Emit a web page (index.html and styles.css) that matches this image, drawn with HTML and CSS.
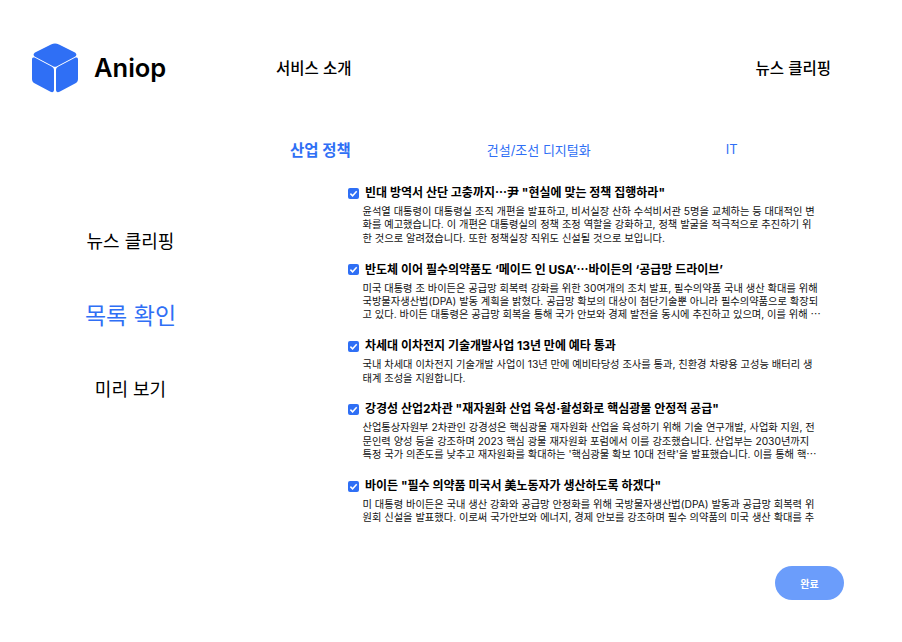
FILE: index.html
```html
<!DOCTYPE html>
<html lang="ko">
<head>
  <meta charset="UTF-8">
  <meta name="viewport" content="width=device-width, initial-scale=1.0">
  <title>Aniop</title>
  <link rel="stylesheet" href="styles.css">
</head>
<body>
  <header class="topbar">
    <a class="logo" href="#">
      <svg class="logo-icon" viewBox="0 0 46 50" width="46" height="50">
        <path fill="#2f6ff5" d="M19 1.500 3.500 9.200c-2.500 1.300-2.500 3.600 0 4.900L21 23.200c1.300.7 2.700.7 4 0l17.500-9.100c2.500-1.300 2.500-3.600 0-4.900L27 1.500c-2.800-1.400-5.200-1.400-8 0Z"/>
        <path fill="#2f6ff5" d="M0 16.500v19.500c0 2 .8 3.300 2.500 4.200l16 8.600c2 1 3.500.2 3.500-2V27.500c0-1.900-.8-3-2.400-3.900L3.500 15C1.500 14 0 14.500 0 16.500Z"/>
        <path fill="#2f6ff5" d="M46 16.500v19.500c0 2-.8 3.300-2.500 4.200l-16 8.600c-2 1-3.500.2-3.500-2V27.500c0-1.900.8-3 2.400-3.900L42.500 15c2-1 3.500-.5 3.500 1.500Z"/>
      </svg>
      <span class="logo-text">Aniop</span>
    </a>
    <nav class="topnav">
      <a href="#">서비스 소개</a>
      <a href="#">뉴스 클리핑</a>
    </nav>
  </header>

  <div class="tabs">
    <a class="tab tab-active" href="#">산업 정책</a>
    <a class="tab tab-mid" href="#">건설/조선 디지털화</a>
    <a class="tab tab-it" href="#">IT</a>
  </div>

  <main class="content">
    <aside class="side">
      <a href="#">뉴스 클리핑</a>
      <a class="side-active" href="#">목록 확인</a>
      <a href="#">미리 보기</a>
    </aside>

    <section class="news">
      <article class="item">
        <h2><span class="check"><svg viewBox="0 0 11 11" width="11" height="11"><path d="M2.400 5.600 4.600 7.800 8.700 3.200"/></svg></span><span>빈대 방역서 산단 고충까지<span class="ell">…</span>尹 "현실에 맞는 정책 집행하라"</span></h2>
        <p>윤석열 대통령이 대통령실 조직 개편을 발표하고, 비서실장 산하 수석비서관 5명을 교체하는 등 대대적인 변<br>화를 예고했습니다. 이 개편은 대통령실의 정책 조정 역할을 강화하고, 정책 발굴을 적극적으로 추진하기 위<br>한 것으로 알려졌습니다. 또한 정책실장 직위도 신설될 것으로 보입니다.</p>
      </article>
      <article class="item">
        <h2><span class="check"><svg viewBox="0 0 11 11" width="11" height="11"><path d="M2.400 5.600 4.600 7.800 8.700 3.200"/></svg></span><span>반도체 이어 필수의약품도 ‘메이드 인 USA’<span class="ell">…</span>바이든의 ‘공급망 드라이브’</span></h2>
        <p>미국 대통령 조 바이든은 공급망 회복력 강화를 위한 30여개의 조치 발표, 필수의약품 국내 생산 확대를 위해<br>국방물자생산법(DPA) 발동 계획을 밝혔다. 공급망 확보의 대상이 첨단기술뿐 아니라 필수의약품으로 확장되<br>고 있다. 바이든 대통령은 공급망 회복을 통해 국가 안보와 경제 발전을 동시에 추진하고 있으며, 이를 위해 <span class="ell">…</span></p>
      </article>
      <article class="item">
        <h2><span class="check"><svg viewBox="0 0 11 11" width="11" height="11"><path d="M2.400 5.600 4.600 7.800 8.700 3.200"/></svg></span><span>차세대 이차전지 기술개발사업 13년 만에 예타 통과</span></h2>
        <p>국내 차세대 이차전지 기술개발 사업이 13년 만에 예비타당성 조사를 통과, 친환경 차량용 고성능 배터리 생<br>태계 조성을 지원합니다.</p>
      </article>
      <article class="item">
        <h2><span class="check"><svg viewBox="0 0 11 11" width="11" height="11"><path d="M2.400 5.600 4.600 7.800 8.700 3.200"/></svg></span><span>강경성 산업2차관 "재자원화 산업 육성·활성화로 핵심광물 안정적 공급"</span></h2>
        <p>산업통상자원부 2차관인 강경성은 핵심광물 재자원화 산업을 육성하기 위해 기술 연구개발, 사업화 지원, 전<br>문인력 양성 등을 강조하며 2023 핵심 광물 재자원화 포럼에서 이를 강조했습니다. 산업부는 2030년까지<br>특정 국가 의존도를 낮추고 재자원화를 확대하는 '핵심광물 확보 10대 전략'을 발표했습니다. 이를 통해 핵<span class="ell">…</span></p>
      </article>
      <article class="item">
        <h2><span class="check"><svg viewBox="0 0 11 11" width="11" height="11"><path d="M2.400 5.600 4.600 7.800 8.700 3.200"/></svg></span><span>바이든 "필수 의약품 미국서 美노동자가 생산하도록 하겠다"</span></h2>
        <p>미 대통령 바이든은 국내 생산 강화와 공급망 안정화를 위해 국방물자생산법(DPA) 발동과 공급망 회복력 위<br>원회 신설을 발표했다. 이로써 국가안보와 에너지, 경제 안보를 강조하며 필수 의약품의 미국 생산 확대를 추</p>
      </article>
    </section>
  </main>

  <div class="actions">
    <button class="done" type="button">완료</button>
  </div>
</body>
</html>
```
FILE: styles.css
```css
body {
  font-family: Inter, "Noto Sans CJK KR", sans-serif;
  background-color: #fff;
  color: #000;
  margin: 0;
  padding: 0;
  height: 642px;
  overflow: hidden;
}
a {
  color: inherit;
  text-decoration: none;
}
.topbar {
  display: flex;
  align-items: center;
  padding: 43px 71px 0 32px;
  height: 50px;
}
.logo {
  display: flex;
  align-items: center;
  gap: 16px;
  width: 244px;
}
.logo-text {
  font-size: 25.500px;
  font-weight: 600;
  padding-bottom: 2px;
}
.topnav {
  flex: 1;
  display: flex;
  justify-content: space-between;
  font-size: 15.500px;
  font-weight: 500;
  padding-bottom: 2px;
}
.tabs {
  display: flex;
  align-items: center;
  height: 24px;
  margin-top: 44px;
  padding-left: 290px;
  color: #2f6ff5;
  font-size: 13px;
}
.tab-active {
  font-size: 15.500px;
  font-weight: 700;
}
.tab-mid {
  margin-left: 136px;
}
.tab-it {
  margin-left: 135px;
}
.content {
  display: flex;
  margin-top: 23px;
}
.side {
  width: 261px;
  padding-top: 43px;
  display: flex;
  flex-direction: column;
  align-items: center;
  gap: 44px;
  font-size: 18px;
}
.side-active {
  color: #2f6ff5;
  font-size: 23px;
}
.news {
  flex: 1;
  padding-left: 87px;
  height: 343px;
}
.item {
  margin-bottom: 15.400px;
}
.item h2 {
  display: flex;
  align-items: center;
  margin: 0;
  font-size: 12px;
  font-weight: 700;
  line-height: 18px;
  white-space: nowrap;
}
.ell {
  font-family: "Noto Sans CJK KR", sans-serif;
  line-height: 0;
}
.check {
  display: flex;
  width: 11px;
  height: 11px;
  margin-right: 6px;
  border-radius: 2px;
  background-color: #2f6ff5;
}
.check path {
  fill: none;
  stroke: #fff;
  stroke-width: 1.500;
}
.item p {
  margin: 3px 0 0 14.500px;
  font-size: 10.250px;
  line-height: 13.400px;
  white-space: nowrap;
  color: #111;
}
.actions {
  display: flex;
  justify-content: flex-end;
  padding-right: 58px;
  margin-top: 39px;
}
.done {
  width: 69px;
  height: 34px;
  border: 0;
  border-radius: 17px;
  background-color: #6b9dfb;
  color: #fff;
  font-family: inherit;
  font-size: 10px;
  font-weight: 700;
}
```
